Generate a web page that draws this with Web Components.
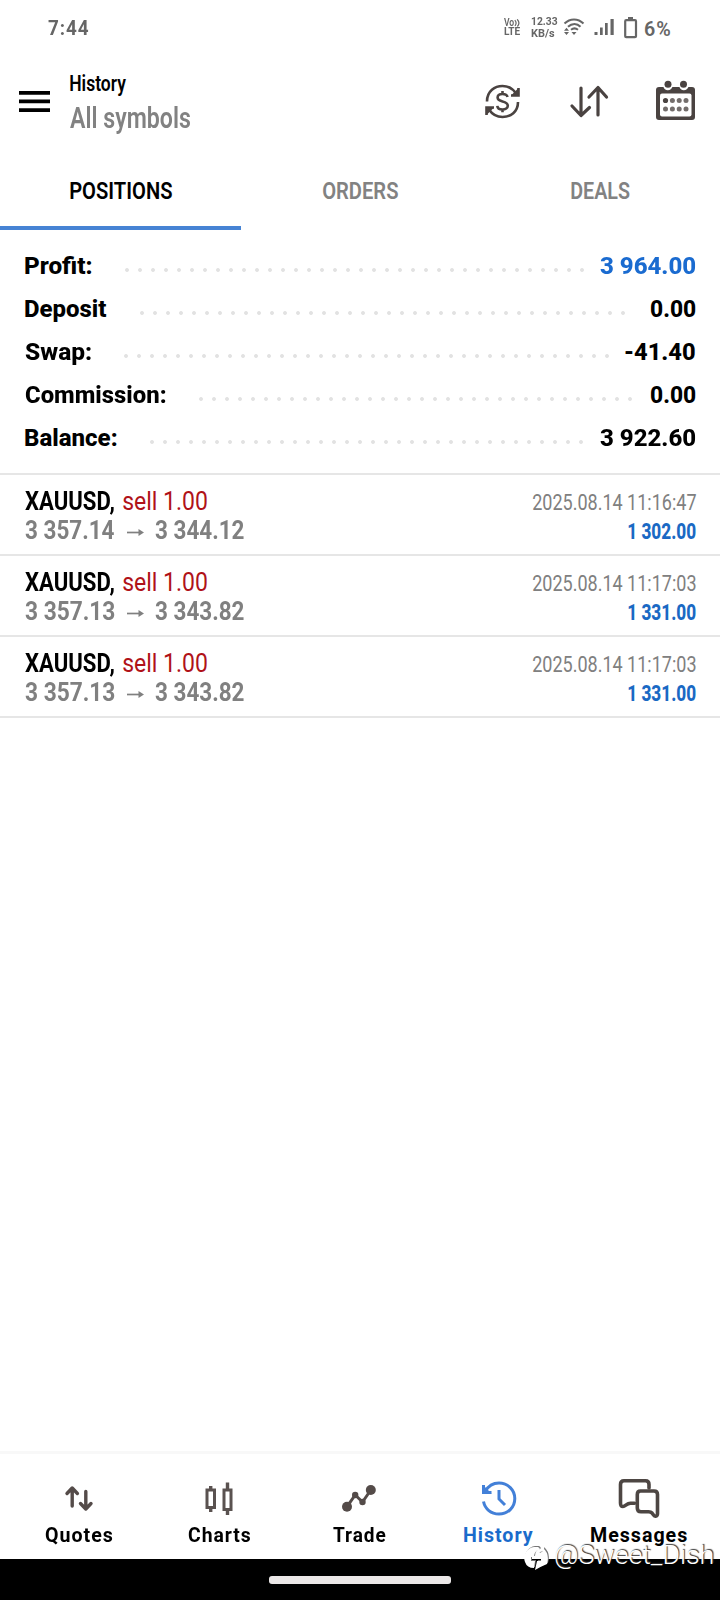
<!DOCTYPE html>
<html lang="en">
<head>
<meta charset="utf-8">
<title>History</title>
<style>
  html, body { margin: 0; background: #fff; }
  body { font-family: Roboto, "Liberation Sans", sans-serif; width: 720px; height: 1600px; overflow: hidden; }
</style>
</head>
<body>
<history-screen></history-screen>

<script>
const define = (name, html, setup) => {
  const tpl = document.createElement('template');
  tpl.innerHTML = html;
  customElements.define(name, class extends HTMLElement {
    connectedCallback() {
      if (this.shadowRoot) return;
      this.attachShadow({ mode: 'open' }).append(tpl.content.cloneNode(true));
      if (setup) setup(this, this.shadowRoot);
    }
  });
};

/* Condensed line of text: its ink is fitted to the width given in "w". */
customElements.define('fit-text', class extends HTMLElement {
  connectedCallback() {
    if (this.shadowRoot) return;
    const size = +this.getAttribute('size'), w = +this.getAttribute('w');
    const weight = this.getAttribute('weight') || 400, ls = this.getAttribute('ls') || 0;
    const line = this.getAttribute('line') || Math.ceil(size * 1.2);
    const root = this.attachShadow({ mode: 'open' });
    root.innerHTML = `<style>
      :host { display: block; flex: none; width: ${w}px; height: ${line}px; }
      span { display: inline-block; white-space: nowrap; vertical-align: top; transform-origin: 0 50%;
        font-size: ${size}px; font-weight: ${weight}; line-height: ${line}px; letter-spacing: ${ls}px; }
    </style><span></span>`;
    const span = root.querySelector('span');
    span.textContent = this.getAttribute('text');
    const ctx = document.createElement('canvas').getContext('2d');
    ctx.font = `${weight} ${size}px Roboto, "Liberation Sans", sans-serif`;
    ctx.letterSpacing = ls + 'px';
    const m = ctx.measureText(span.textContent);
    const ink = m.actualBoundingBoxLeft + m.actualBoundingBoxRight;
    const k = w / ink;
    span.style.transform = `translateX(${m.actualBoundingBoxLeft * k}px) scaleX(${k})`;
  }
});

define('status-bar', `<style>
  :host { display: flex; height: 56px; color: #666; box-sizing: border-box; padding-left: 47.5px; align-items: center; }
  .clock { margin-top: 1px; }
  .end { display: flex; margin-left: 415.5px; align-items: center; }
  .net { display: flex; flex-direction: column; width: 27px; margin: -2px 1px 0 9.5px; }
  .volte { display: flex; flex-direction: column; margin-top: -1px; }
  .vo { display: flex; height: 8px; }
  svg { display: block; flex: none; }
</style>
<fit-text class="clock" text="7:44" size="19.5" weight="700" ls="1" w="40.5"></fit-text>
<div class="end">
  <div class="volte">
    <div class="vo"><fit-text text="Vo" size="10" weight="600" w="10.5" line="8"></fit-text>
      <svg width="7" height="8" viewBox="0 0 7 8" fill="none" stroke="#666" stroke-width="1.2"><path d="M.8 1.2C2.5 3 2.500 5 1 7M3.200.3C5.200 2.500 5.200 5.500 3.400 7.500"/></svg></div>
    <fit-text text="LTE" size="10.500" weight="700" w="16.3" line="9"></fit-text>
  </div>
  <div class="net">
    <fit-text text="12.33" size="11.8" weight="700" w="26.8" line="12"></fit-text>
    <fit-text text="KB/s" size="11.8" weight="700" w="23.5" line="12"></fit-text>
  </div>
  <svg width="82" height="30" viewBox="560 12 82 30" fill="none" stroke="#666" stroke-width="2">
    <path d="M565.500 22.500C571 17 579 17 584.500 22.500M569 25.800C573 22 578 22 581.500 25.800M572 28.800C574 27.200 577 27.200 579 28.800"/>
    <path d="M565 29.700L567.500 26.700L570 29.700ZM565 31L567.500 34L570 31ZM572.500 31L575 34L577.500 31Z" fill="#666" stroke="none"/>
    <path d="M595.500 31h3v3h-3zM601 26.500h2.700v7.500h-2.700zM606 22h2.700v12h-2.700zM611.500 18h3.200v16h-3.200z" fill="#666" stroke="none"/>
    <rect x="626.200" y="19.200" width="10.800" height="17" rx="1" stroke-width="2.200"/><path d="M629 16h5v2.500h-5z" fill="#666" stroke="none"/>
  </svg>
  <fit-text text="6%" size="20" weight="600" w="25" ls="1" style="margin:1px 0 0 4px"></fit-text>
</div>`);

define('app-bar', `<style>
  :host { display: flex; height: 92px; color: #000; }
  .menu { margin: 35px 0 0 19px; width: 31px; height: 21px; flex: none; }
  .titles { margin: 14px 0 0 19.500px; width: 120.500px; }
  .sub { display: block; color: #828282; margin-top: 2px; }
  .actions { display: flex; margin-left: 290px; margin-top: 20px; gap: 37px; }
  svg { display: block; flex: none; }
</style>
<svg class="menu" viewBox="0 0 31 21"><path d="M0 0h31v3.800H0zM0 8.600h31v3.600H0zM0 17.200h31v3.800H0z"/></svg>
<div class="titles">
  <fit-text text="History" size="22.500" weight="600" w="56.500" line="27"></fit-text>
  <fit-text class="sub" text="All symbols" size="30" weight="600" w="120.500" line="38"></fit-text>
</div>
<div class="actions" >
  <svg width="46" height="52" viewBox="480 76 46 52" fill="none" stroke="#4a4341" stroke-width="2.600">
    <path d="M487 101.500C487 91 495 86 502.500 86C508.500 86 513 89 516 93.500M518 102C518 112 510.500 117 502.500 117C496.500 117 492 114 489 109.500"/>
    <path d="M518.500 88V95.500H511M486.500 115V107.500H494"/><path d="M518.500 88V95.500H511ZM486.500 115V107.500H494Z" fill="#4a4341" stroke="none"/>
    <path d="M507.500 97C507 94.800 505 94 502.500 94C499.500 94 497.600 95.500 497.600 97.600C497.600 100 499.600 100.800 502.500 101.500C505.800 102.300 507.800 103.500 507.800 105.800C507.800 108 505.500 109.500 502.500 109.500C499.500 109.500 497.500 108 497.300 105.800M502.500 91V94M502.500 109.500V112.300" stroke-width="2.600"/>
  </svg>
  <svg width="46" height="52" viewBox="563 76 46 52" fill="none" stroke="#4a4341" stroke-width="3.200" stroke-linecap="round" stroke-linejoin="round">
    <path d="M581 88V115M572 106L581 115.500L589.500 107.500M598 115V88M589 97L598 87.500L606.500 97"/>
  </svg>
  <svg width="46" height="52" viewBox="653 76 46 52" style="margin-left:7px">
    <rect x="656" y="87" width="39" height="33" rx="3" fill="#4a4341"/>
    <path d="M663 85C663.500 92 672 92 673 85M679 85C679.500 92 688 92 689 85" fill="#fff"/>
    <rect x="660" y="93.500" width="31.500" height="23" rx="2" fill="#fff"/>
    <g fill="#4a4341"><circle cx="668" cy="84.300" r="3.500"/><circle cx="683.500" cy="84.300" r="3.500"/><circle cx="665.500" cy="100.500" r="2.600"/></g>
    <g fill="#736d6b"><circle cx="672.400" cy="100.500" r="2.500"/><circle cx="679.200" cy="100.500" r="2.500"/><circle cx="686" cy="100.500" r="2.500"/><circle cx="665.500" cy="109" r="2.500"/><circle cx="672.400" cy="109" r="2.500"/><circle cx="679.200" cy="109" r="2.500"/><circle cx="686" cy="109" r="2.500"/></g>
  </svg>
</div>`);

define('tab-item', `<style>
  :host { display: flex; flex: 1; justify-content: center; align-items: center; box-sizing: border-box;
    color: #828282; border-bottom: 4px solid transparent; padding-top: 7px; }
  :host([selected]) { color: #000; border-color: #4683d4; padding-left: 1.500px; }
</style><fit-text></fit-text>`, (el, root) => {
  fill(root.querySelector('fit-text'), { text: el.getAttribute('label'), w: el.getAttribute('w'), size: 24.5, weight: 600, line: 30 });
});

/* Puts a fitted text with these attributes in the place of a node. */
function fill(node, attrs) {
  const t = document.createElement('fit-text');
  for (const k in attrs) t.setAttribute(k, attrs[k]);
  if (node.className) t.className = node.className;
  node.replaceWith(t);
}

define('summary-row', `<style>
  :host { display: flex; height: 43px; align-items: center; padding: 0 24.500px 0 24.500px; color: #000; }
  .dots { height: 4px; flex: none; margin: 10px 0 0 33.500px;
    background: radial-gradient(circle at 2px 2px, #e2e2e2 1.500px, transparent 2.300px) 0 0 / 13px 4px repeat-x; }
  .gap { flex: 1; }
  .value { color: var(--value, #000); }
</style><span class="l"></span><div class="dots"></div><div class="gap"></div><span class="value"></span>`, (el, root) => {
  const a = n => el.getAttribute(n);
  root.querySelector('.dots').style.width = a('dots') * 13 - 9 + 'px';
  fill(root.querySelector('.l'), { text: a('label'), w: a('lw'), size: 24.6, weight: 800, line: 29 });
  fill(root.querySelector('.value'), { text: a('value'), w: a('vw'), size: 24.6, weight: 800, line: 29 });
});

define('deal-row', `<style>
  :host { display: flex; justify-content: space-between; height: 81px; box-sizing: border-box;
    border-bottom: 2px solid #e6e6e6; padding: 12px 24.500px 0 24.500px; }
  .left, .right { display: flex; flex-direction: column; }
  .right { align-items: flex-end; padding-top: 1px; }
  .line { display: flex; height: 29px; }
  .sym { color: #000; } .side { color: #b01218; margin-left: 9px; }
  .price { color: #808080; }
  .time { color: #808080; } .profit { color: #1a69c4; }
  svg { margin: 10px 11.500px 0 12.500px; }
</style>
<div class="left">
  <div class="line"><span class="sym"></span><span class="side"></span></div>
  <div class="line price"><span class="a"></span><svg width="17" height="12" viewBox="0 0 17 12" fill="none" stroke="#808080" stroke-width="1.700"><path d="M0 6.500H14"/><path d="M11.500 3L17 6.500L11.500 10Z" fill="#808080" stroke="none"/></svg><span class="b"></span></div>
</div>
<div class="right"><span class="time"></span><span class="profit"></span></div>`, (el, root) => {
  const a = n => el.getAttribute(n), put = (s, o) => fill(root.querySelector(s), o);
  put('.sym', { text: 'XAUUSD,', w: 89.5, size: 26.7, weight: 700, line: 29 });
  put('.side', { text: 'sell 1.00', w: 84, size: 26.7, weight: 450, line: 29 });
  put('.a', { text: a('from'), w: 89.5, size: 26.2, weight: 700, line: 29 });
  put('.b', { text: a('to'), w: 89.5, size: 26.2, weight: 700, line: 29 });
  put('.time', { text: a('time'), w: 163, size: 22.6, weight: 430, line: 29 });
  put('.profit', { text: a('profit'), w: 67.5, size: 22, weight: 800, line: 29 });
});

define('nav-item', `<style>
  :host { display: flex; flex-direction: column; align-items: center; width: 140px; flex: none; color: #000; }
  :host([selected]) { color: #1a6bcb; }
  .icon { height: 52px; margin-top: 17px; }
</style><div class="icon"><slot></slot></div><span class="t"></span>`, (el, root) => {
  fill(root.querySelector('.t'), { text: el.getAttribute('label'), w: el.getAttribute('w'), size: 20, weight: 700, ls: 1, line: 24 });
});

define('bottom-nav', `<style>
  :host { display: flex; height: 108px; box-sizing: border-box; border-top: 3px solid #f8f8f8; padding-left: 9px; background: #fff; }
  svg { display: block; }
</style>
<nav-item label="Quotes" w="67.500"><svg width="60" height="54" viewBox="49.500 1471 60 54" fill="none" stroke="#544b49" stroke-width="3.400" stroke-linecap="round" stroke-linejoin="round"><path d="M72.700 1506V1489M67.500 1493.500L72.700 1488L77.900 1493.500M86.300 1491.500V1508M81 1503.500L86.300 1509L91.500 1503.500"/></svg></nav-item>
<nav-item label="Charts" w="62.500"><svg width="60" height="54" viewBox="189.500 1471 60 54" fill="none" stroke="#5a5250" stroke-width="3"><rect x="207.500" y="1490" width="7.500" height="17.500"/><rect x="224.500" y="1490" width="7" height="19.500"/><path d="M211.200 1486V1490M211.200 1507V1512M228 1482.500V1490M228 1509V1515" stroke-width="3.400"/></svg></nav-item>
<nav-item label="Trade" w="53"><svg width="60" height="54" viewBox="329.500 1471 60 54" fill="#544b49"><circle cx="347.500" cy="1506.700" r="5"/><circle cx="371.300" cy="1490" r="5"/><circle cx="355.700" cy="1495" r="3.200"/><circle cx="363" cy="1502" r="3.200"/><path d="M347.500 1506.700L355.700 1495L363 1502L371.300 1490" fill="none" stroke="#544b49" stroke-width="3"/></svg></nav-item>
<nav-item label="History" w="69.500" selected><svg width="60" height="54" viewBox="469.500 1471 60 54" fill="none" stroke="#4380d8" stroke-width="3"><path d="M485.700 1491.500C489 1485.500 494 1483 499.500 1483C508.500 1483 515.300 1490 515.300 1498.500C515.300 1507.500 508.500 1514 499.500 1514C491.500 1514 485.500 1509 484 1501.500"/><path d="M484 1485V1492.500H492M499.500 1490V1499L505.500 1505"/><path d="M483.500 1485V1493.500H492Z" fill="#4380d8" stroke="none"/></svg></nav-item>
<nav-item label="Messages" w="96"><svg width="60" height="54" viewBox="609.500 1471 60 54" fill="none" stroke="#4d4643" stroke-width="3.600" stroke-linejoin="round" stroke-linecap="round"><path d="M635 1503.200H631C627 1503.200 626 1506.500 623.500 1506.500C621.500 1506.500 621 1505.500 621 1503V1484.500Q621 1480.800 624.500 1480.800H646Q649.500 1480.800 649.500 1484.500V1488"/><path d="M641 1491H654.500Q658 1491 658 1494.500V1513.500C658 1516.500 655.500 1517 654 1515L652.500 1513C651.500 1511.800 650.500 1511.800 649 1511.800H641.500Q637.800 1511.800 637.800 1508V1494.500Q637.800 1491 641 1491Z"/></svg></nav-item>`);

define('gesture-bar', `<style>
  :host { display: flex; height: 41px; background: #000; justify-content: center; }
  div { width: 182px; height: 7.500px; border-radius: 3px; background: #ebe8e8; margin-top: 17px; }
</style><div></div>`);

define('author-mark', `<style>
  :host { position: absolute; left: 524px; top: 1542px; display: flex; color: #fff; text-shadow: 1px -1px 1px #333; }
  svg { margin: 3px 6px 0 0; filter: drop-shadow(1px -1px .500px #777); }
</style>
<svg width="25" height="26" viewBox="0 0 25 26"><path d="M10 2A11 11 0 0 0 1 17Q3 23 10 23L11 16H7V12H10Q10 6 15 5Q17 4 14 2Z" fill="#fff"/><path d="M15 8Q14 10 14 12H17V16H13L11 25Q18 21 23 19Q26 9 19 3Q20 7 15 8Z" fill="#fff"/></svg>
<fit-text text="@Sweet_Dish" size="26" weight="300" w="158" line="26"></fit-text>`);

define('history-screen', `<style>
  :host { display: flex; flex-direction: column; width: 720px; height: 1600px; position: relative; background: #fff; }
  .tabs { display: flex; height: 82px; }
  .summary { padding: 13.500px 0 14.500px; border-bottom: 2px solid #e6e6e6; }
  .rest { flex: 1; }
</style>
<status-bar></status-bar>
<app-bar></app-bar>
<div class="tabs">
  <tab-item label="POSITIONS" w="102.500" selected></tab-item>
  <tab-item label="ORDERS" w="75.500"></tab-item>
  <tab-item label="DEALS" w="59"></tab-item>
</div>
<div class="summary">
  <summary-row label="Profit:" lw="66.500" dots="36" value="3 964.00" vw="96" style="--value:#1a6bd0"></summary-row>
  <summary-row label="Deposit" lw="82" dots="38" value="0.00" vw="45"></summary-row>
  <summary-row label="Swap:" lw="66" dots="38" value="-41.40" vw="70.500"></summary-row>
  <summary-row label="Commission:" lw="140.500" dots="34" value="0.00" vw="45"></summary-row>
  <summary-row label="Balance:" lw="91.500" dots="34" value="3 922.60" vw="96"></summary-row>
</div>
<deal-row from="3 357.14" to="3 344.12" time="2025.08.14 11:16:47" profit="1 302.00"></deal-row>
<deal-row from="3 357.13" to="3 343.82" time="2025.08.14 11:17:03" profit="1 331.00"></deal-row>
<deal-row from="3 357.13" to="3 343.82" time="2025.08.14 11:17:03" profit="1 331.00"></deal-row>
<div class="rest"></div>
<bottom-nav></bottom-nav>
<gesture-bar></gesture-bar>
<author-mark></author-mark>`);
</script>
</body>
</html>
